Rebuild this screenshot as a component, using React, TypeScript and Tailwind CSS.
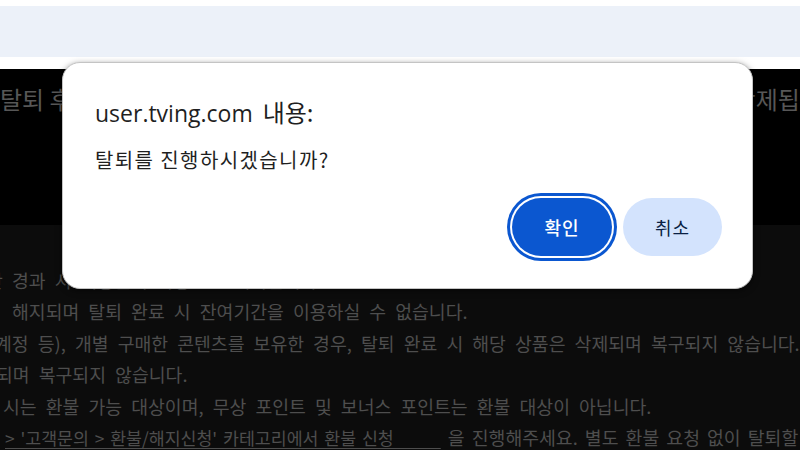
import React from "react";

const kr = { fontFamily: '"Noto Sans CJK KR", "Noto Sans", sans-serif' };
const dlg = { fontFamily: '"Open Sans", "Noto Sans CJK KR", sans-serif' };

function BackgroundPage() {
    return <div className="flex flex-col" style={kr}>
        <div className="h-[6px] bg-white" />
        <div className="h-[51px] bg-[#ecf1f9]" />
        <div className="h-[12px] bg-white" />
        <section className="h-[156px] bg-black pt-[12px] overflow-hidden">
            <div className="flex justify-between whitespace-nowrap text-[24px] text-[#575757] -mr-[44px]">
                <span>탈퇴 후 회원정보 및</span>
                <span>이용기록은 모두 삭제됩니다</span>
            </div>
        </section>
        <section className="h-[225px] bg-[#0c0c0c] pt-[40px] text-[18.3px] leading-[31.4px] [word-spacing:5px] text-[#4e4e4e] whitespace-nowrap overflow-hidden">
            <div className="-ml-[14px]">간 경과 시 이용권이 자동으로 해지됩니다.</div>
            <div className="pl-[12px]">해지되며 탈퇴 완료 시 잔여기간을 이용하실 수 없습니다.</div>
            <div className="-ml-[5px]">계정 등), 개별 구매한 콘텐츠를 보유한 경우, 탈퇴 완료 시 해당 상품은 삭제되며 복구되지 않습니다.</div>
            <div className="-ml-[4px]">되며 복구되지 않습니다.</div>
            <div className="pl-[3px]">시는 환불 가능 대상이며, 무상 포인트 및 보너스 포인트는 환불 대상이 아닙니다.</div>
            <div className="pl-[5px]">
                <span className="underline underline-offset-[3px] text-[17.3px] [word-spacing:2px]">{"> '고객문의 > 환불/해지신청' 카테고리에서 환불 신청\u00a0\u00a0\u00a0\u00a0\u00a0\u00a0\u00a0\u00a0"}</span>
                <span className="[word-spacing:3px]"> 을 진행해주세요. 별도 환불 요청 없이 탈퇴할 경우 환불이 불가합니다.</span>
            </div>
        </section>
    </div>
}

function ConfirmDialog() {
    return <div className="absolute left-[62px] top-[62px] w-[691px] h-[227px] flex flex-col bg-white rounded-[18px] border border-[#c4c4c4] shadow-[0_2px_6px_rgba(0,0,0,0.5)]" style={dlg}>
        <div className="pl-[32px] pt-[34px] text-[23px] leading-[30px] text-[#1f1f1f] [word-spacing:4px]">
            user.tving.com <span className="text-[24px]" style={kr}>내용:</span>
        </div>
        <div className="pl-[32px] pt-[19px] text-[20px] leading-[26px] tracking-[1.4px] text-[#1f1f1f]" style={kr}>탈퇴를 진행하시겠습니까?</div>
        <div className="mt-auto flex justify-end gap-[11px] pr-[30px] pb-[32px]" style={kr}>
            <button className="w-[100px] h-[58px] rounded-full bg-[#0b57d0] text-white text-[18px] tracking-[1px] font-medium ring-3 ring-[#0b57d0] ring-offset-2 ring-offset-white">확인</button>
            <button className="w-[99px] h-[58px] rounded-full bg-[#d3e3fd] text-[#0a1f44] text-[18px] tracking-[1px]">취소</button>
        </div>
    </div>
}

export default function App() {
    return <div className="relative w-[800px] h-[450px] overflow-hidden bg-white">
        <BackgroundPage />
        <ConfirmDialog />
    </div>
}
